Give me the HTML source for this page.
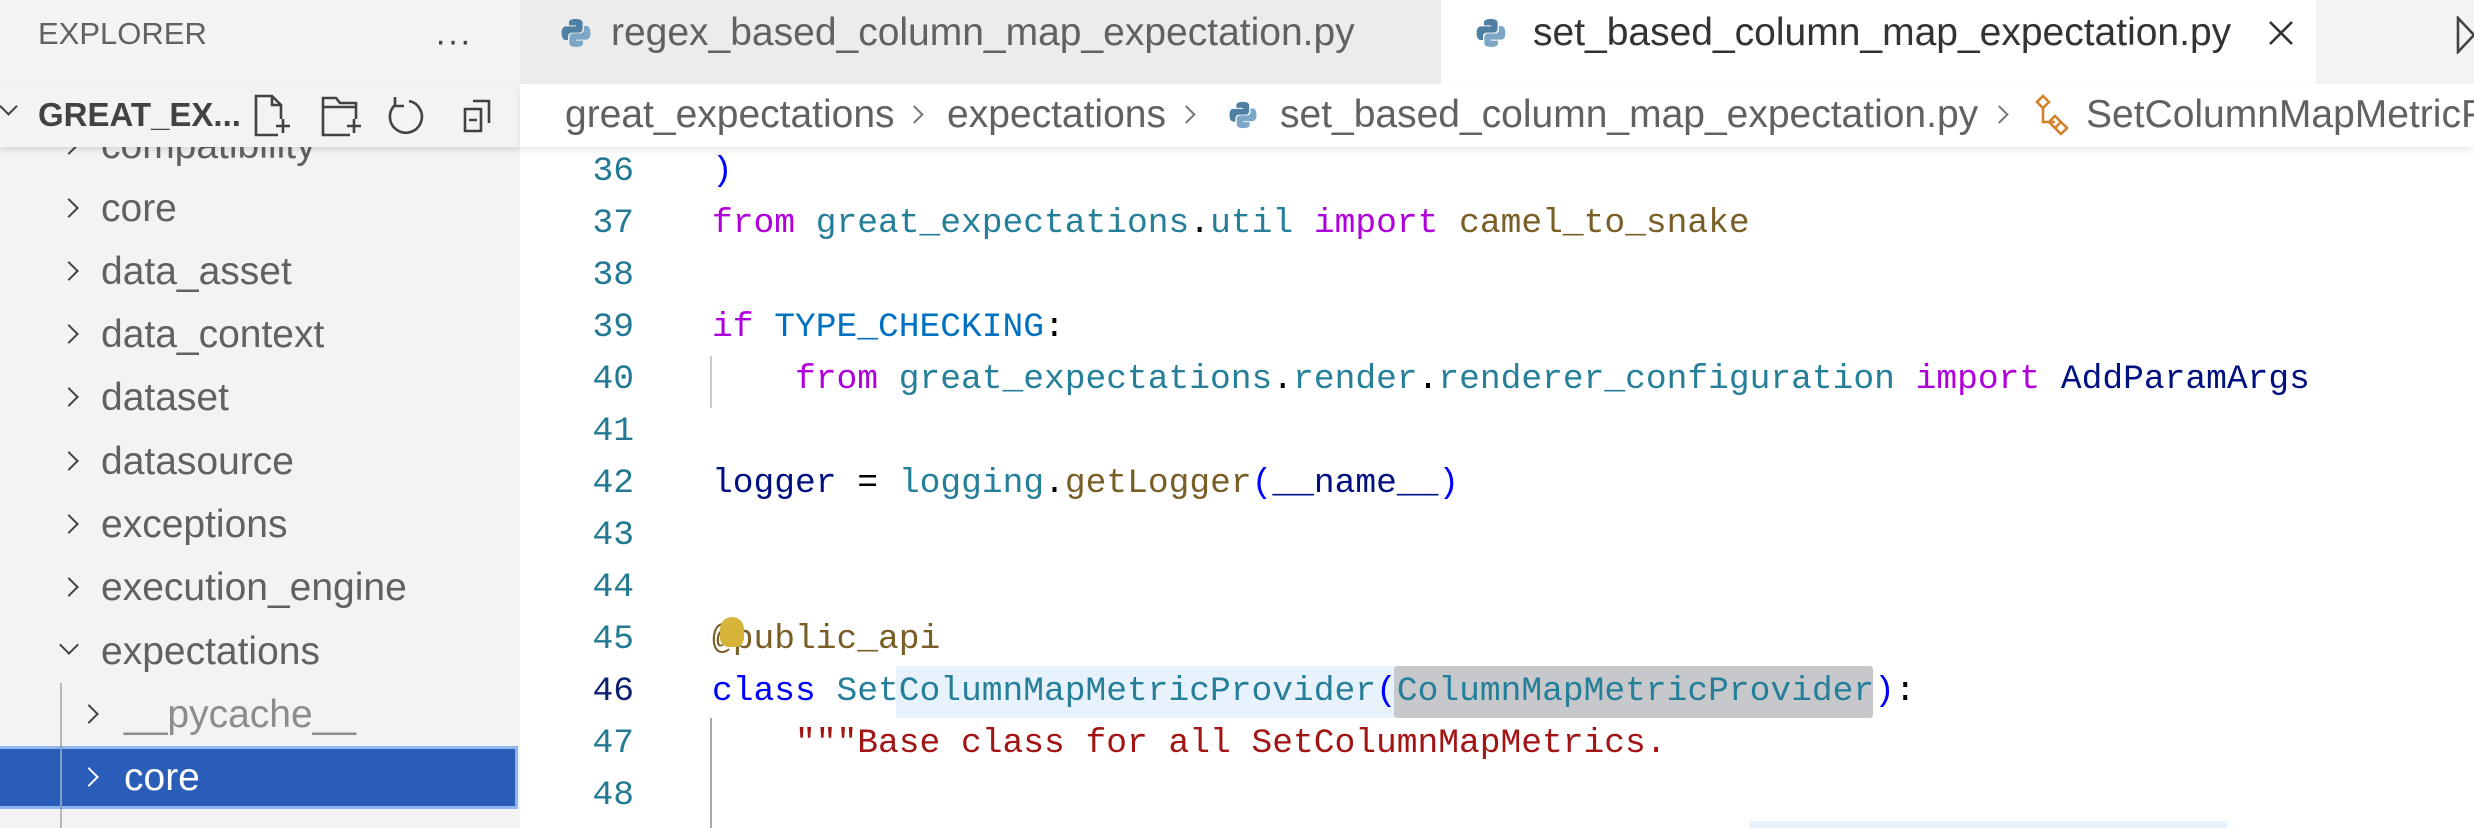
<!DOCTYPE html>
<html><head><meta charset="utf-8"><style>
*{margin:0;padding:0;box-sizing:border-box}
html,body{width:2474px;height:828px;overflow:hidden}
body{background:#fff;position:relative;font-family:"Liberation Sans",sans-serif}
.a{position:absolute;white-space:pre}
.ui{font-size:39px;line-height:44px}
.code{font-family:"Liberation Mono",monospace;font-size:34.6px;line-height:52px}
.ln{position:absolute;left:560px;width:74px;text-align:right;color:#237893;font-family:"Liberation Mono",monospace;font-size:34.6px;line-height:52px}
.k{color:#af00db}.m{color:#267f99}.f{color:#795e26}.v{color:#001080}.b{color:#0000ff}.s{color:#a31515}.p{color:#000}
.tr{position:absolute;font-size:39px;line-height:63px;color:#616161;height:63px}
.chev{display:inline-block;width:14px;height:14px;border-right:2.5px solid #424242;border-bottom:2.5px solid #424242;transform:rotate(-45deg);position:absolute;top:24px}
.chevd{display:inline-block;width:14px;height:14px;border-right:2.5px solid #424242;border-bottom:2.5px solid #424242;transform:rotate(45deg);position:absolute;top:18px}
.bc{position:absolute;top:93px;font-size:39px;line-height:44px;color:#616161;white-space:pre}
.sep{position:absolute;top:108px;width:13px;height:13px;border-right:2.5px solid #777;border-bottom:2.5px solid #777;transform:rotate(-45deg)}
</style></head><body>
<div class="a" style="left:0;top:0;width:520px;height:828px;background:#f3f3f3"></div>
<div class="tr" style="left:0;top:114px;width:520px"><span class="chev" style="left:62px"></span><span style="position:absolute;left:101px">compatibility</span></div>
<div class="tr" style="left:0;top:177px"><span class="chev" style="left:62px"></span><span style="position:absolute;left:101px">core</span></div>
<div class="tr" style="left:0;top:240px"><span class="chev" style="left:62px"></span><span style="position:absolute;left:101px">data_asset</span></div>
<div class="tr" style="left:0;top:303px"><span class="chev" style="left:62px"></span><span style="position:absolute;left:101px">data_context</span></div>
<div class="tr" style="left:0;top:366px"><span class="chev" style="left:62px"></span><span style="position:absolute;left:101px">dataset</span></div>
<div class="tr" style="left:0;top:430px"><span class="chev" style="left:62px"></span><span style="position:absolute;left:101px">datasource</span></div>
<div class="tr" style="left:0;top:493px"><span class="chev" style="left:62px"></span><span style="position:absolute;left:101px">exceptions</span></div>
<div class="tr" style="left:0;top:556px"><span class="chev" style="left:62px"></span><span style="position:absolute;left:101px">execution_engine</span></div>
<div class="tr" style="left:0;top:620px"><span class="chevd" style="left:62px"></span><span style="position:absolute;left:101px">expectations</span></div>
<div class="a" style="left:60px;top:683px;width:2px;height:145px;background:#b8b8b8"></div>
<div class="tr" style="left:0;top:683px"><span class="chev" style="left:82px"></span><span style="position:absolute;left:124px;color:#8c8c8c">__pycache__</span></div>
<div class="a" style="left:0;top:746px;width:518px;height:63px;background:#2a5db8;border:3px solid #8fb6ee;border-left:none"></div>
<div class="tr" style="left:0;top:746px;color:#fff"><span class="chev" style="left:82px;border-color:#fff"></span><span style="position:absolute;left:124px">core</span></div>
<div class="a" style="left:60px;top:746px;width:2px;height:63px;background:#7f9ccc"></div>
<div class="a" style="left:0;top:0;width:520px;height:84px;background:#f3f3f3"></div>
<div class="a" style="left:38px;top:14px;color:#616161;font-size:31px;line-height:40px">EXPLORER</div>
<div class="a" style="left:435px;top:22px;font-size:34px;color:#424242;letter-spacing:1px">···</div>
<div class="a" style="left:0;top:84px;width:520px;height:63px;background:#f3f3f3;box-shadow:0 3px 6px rgba(0,0,0,0.12)"></div>
<div class="chevd" style="position:absolute;left:2px;top:100px;width:13px;height:13px"></div>
<div class="a" style="left:38px;top:95px;font-weight:bold;color:#424242;font-size:33px;line-height:40px">GREAT_EX...</div>
<svg class="a" style="left:250px;top:93px" width="260" height="46" viewBox="0 0 260 46" fill="none" stroke="#424242" stroke-width="2.6">
<path d="M28 42H6V3h16l9 9v14M22 3v9h9M26 33h14M33 26v14"/>
<path d="M100 42H73V5h13l4 5h16v16M73 14h33M97 33h14M104 26v14"/>
<path d="M159 8a16 16 0 1 1-14 4M145 4v9h9" />
<path d="M215 16h16v22h-16zM223 8h16v22M219 27h8"/>
</svg>
<div class="a" style="left:520px;top:0;width:1954px;height:84px;background:#ececec"></div>
<div class="a" style="left:1441px;top:0;width:875px;height:84px;background:#fff"></div>
<div class="a" style="left:2316px;top:0;width:158px;height:84px;background:#f3f3f3"></div>
<svg class="a" style="left:560px;top:17px" width="32" height="32" viewBox="0 0 16 16"><path d="M7.9 1C4.3 1 4.5 2.6 4.5 2.6v1.6h3.5v.5H3.1S.8 4.4.8 8s2 3.5 2 3.5h1.2V9.8s-.1-2 2-2h3.4s1.9 0 1.9-1.9V2.9S11.6 1 7.9 1z" fill="#4f7fa3"/><path d="M8.1 15c3.6 0 3.4-1.6 3.4-1.6v-1.6H8v-.5h4.9s2.3.3 2.3-3.3-2-3.5-2-3.5H12v1.7s.1 2-2 2H6.6s-1.9 0-1.9 1.9v3.1S4.4 15 8.1 15z" fill="#7da7c7"/></svg>
<div class="a ui" style="left:611px;top:11px;color:#616161">regex_based_column_map_expectation.py</div>
<svg class="a" style="left:1475px;top:17px" width="32" height="32" viewBox="0 0 16 16"><path d="M7.9 1C4.3 1 4.5 2.6 4.5 2.6v1.6h3.5v.5H3.1S.8 4.4.8 8s2 3.5 2 3.5h1.2V9.8s-.1-2 2-2h3.4s1.9 0 1.9-1.9V2.9S11.6 1 7.9 1z" fill="#4f7fa3"/><path d="M8.1 15c3.6 0 3.4-1.6 3.4-1.6v-1.6H8v-.5h4.9s2.3.3 2.3-3.3-2-3.5-2-3.5H12v1.7s.1 2-2 2H6.6s-1.9 0-1.9 1.9v3.1S4.4 15 8.1 15z" fill="#7da7c7"/></svg>
<div class="a ui" style="left:1533px;top:11px;color:#333">set_based_column_map_expectation.py</div>
<svg class="a" style="left:2268px;top:20px" width="26" height="26" viewBox="0 0 26 26" stroke="#333" stroke-width="2.6"><path d="M2 2L24 24M24 2L2 24"/></svg>
<svg class="a" style="left:2456px;top:16px" width="18" height="38" viewBox="0 0 18 38" fill="none" stroke="#424242" stroke-width="2.6"><path d="M2 2L18 19L2 36Z"/></svg>
<div class="a" style="left:520px;top:84px;width:1954px;height:63px;background:#fff;box-shadow:0 4px 8px rgba(0,0,0,0.08)"></div>
<div class="bc" style="left:565px">great_expectations</div>
<div class="sep" style="left:908px"></div>
<div class="bc" style="left:947px">expectations</div>
<div class="sep" style="left:1180px"></div>
<svg class="a" style="left:1228px;top:100px" width="30" height="30" viewBox="0 0 16 16"><path d="M7.9 1C4.3 1 4.5 2.6 4.5 2.6v1.6h3.5v.5H3.1S.8 4.4.8 8s2 3.5 2 3.5h1.2V9.8s-.1-2 2-2h3.4s1.9 0 1.9-1.9V2.9S11.6 1 7.9 1z" fill="#4f7fa3"/><path d="M8.1 15c3.6 0 3.4-1.6 3.4-1.6v-1.6H8v-.5h4.9s2.3.3 2.3-3.3-2-3.5-2-3.5H12v1.7s.1 2-2 2H6.6s-1.9 0-1.9 1.9v3.1S4.4 15 8.1 15z" fill="#7da7c7"/></svg>
<div class="bc" style="left:1280px">set_based_column_map_expectation.py</div>
<div class="sep" style="left:1993px"></div>
<svg class="a" style="left:2034px;top:94px" width="40" height="42" viewBox="0 0 40 42" fill="none" stroke="#d1822b" stroke-width="2.6"><path d="M9 2l6 6-6 6-6-6zM9 14v14h12M21 22l6 6-6 6-6-6zM27 28l6 6-6 6-6-6z"/></svg>
<div class="bc" style="left:2086px;width:388px;overflow:hidden">SetColumnMapMetricProvider</div>
<div class="a" style="left:896px;top:666px;width:498px;height:52px;background:#e8f2fc"></div>
<div class="a" style="left:1394px;top:666px;width:479px;height:52px;background:#c6c8cb;border-radius:3px"></div>
<div class="a" style="left:1749px;top:821px;width:478px;height:7px;background:#e8f2fc"></div>
<div class="a" style="left:710px;top:356px;width:2px;height:52px;background:#c8c8c8"></div>
<div class="a" style="left:710px;top:718px;width:2px;height:110px;background:#a8a8a8"></div>
<div class="ln" style="top:146px">36</div>
<div class="ln" style="top:198px">37</div>
<div class="ln" style="top:250px">38</div>
<div class="ln" style="top:302px">39</div>
<div class="ln" style="top:354px">40</div>
<div class="ln" style="top:406px">41</div>
<div class="ln" style="top:458px">42</div>
<div class="ln" style="top:510px">43</div>
<div class="ln" style="top:562px">44</div>
<div class="ln" style="top:614px">45</div>
<div class="ln" style="top:666px;color:#0b216f">46</div>
<div class="ln" style="top:718px">47</div>
<div class="ln" style="top:770px">48</div>
<div class="a code" style="left:712px;top:146px"><span class="b">)</span></div>
<div class="a code" style="left:712px;top:198px"><span class="k">from</span> <span class="m">great_expectations</span><span class="p">.</span><span class="m">util</span> <span class="k">import</span> <span class="f">camel_to_snake</span></div>
<div class="a code" style="left:712px;top:302px"><span class="k">if</span> <span style="color:#0070c1">TYPE_CHECKING</span><span class="p">:</span></div>
<div class="a code" style="left:712px;top:354px">    <span class="k">from</span> <span class="m">great_expectations</span><span class="p">.</span><span class="m">render</span><span class="p">.</span><span class="m">renderer_configuration</span> <span class="k">import</span> <span class="v">AddParamArgs</span></div>
<div class="a code" style="left:712px;top:458px"><span class="v">logger</span> <span class="p">=</span> <span class="m">logging</span><span class="p">.</span><span class="f">getLogger</span><span class="b">(</span><span class="v">__name__</span><span class="b">)</span></div>
<div class="a code" style="left:712px;top:614px"><span class="f">@public_api</span></div>
<div class="a" style="left:720px;top:617px;width:24px;height:30px;border-radius:12px 12px 9px 9px;background:#d6b43a"></div>
<div class="a code" style="left:712px;top:666px"><span class="b">class</span> <span class="m">SetColumnMapMetricProvider</span><span class="b">(</span><span class="m">ColumnMapMetricProvider</span><span class="b">)</span><span class="p">:</span></div>
<div class="a code" style="left:712px;top:718px">    <span class="s">"""Base class for all SetColumnMapMetrics.</span></div>
</body></html>
